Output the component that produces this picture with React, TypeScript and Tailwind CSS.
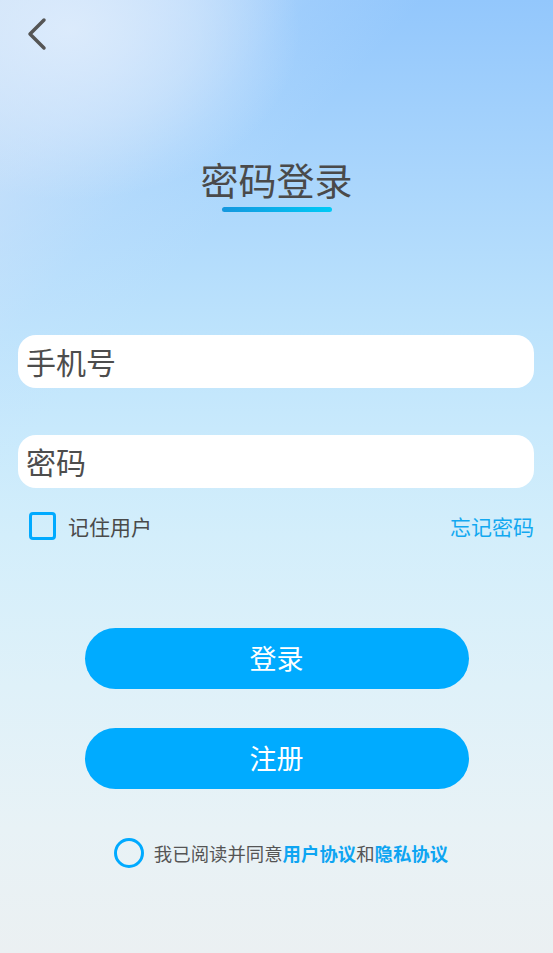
import { useState } from "react";

export default function App() {
  const [remember, setRemember] = useState(false);
  const [agreed, setAgreed] = useState(false);

  return (
    <main
      className="relative h-[953px] w-full overflow-hidden bg-[radial-gradient(ellipse_230px_170px_at_70px_30px,rgba(222,236,252,0.9)_0%,rgba(216,233,252,0.55)_55%,rgba(210,230,252,0)_100%),linear-gradient(132deg,rgba(214,230,246,0.85)_0%,rgba(208,228,250,0.6)_12%,rgba(200,226,252,0.2)_22%,rgba(200,226,252,0)_30%),linear-gradient(180deg,#93c7fc_0%,#a9d5fc_18%,#bde3fc_35%,#c8e9fc_45%,#d3eefb_56%,#dff1f9_72%,#e8f2f6_87%,#ebf0f2_100%)] text-[#505050]"
      style={{ fontFamily: '"Noto Sans CJK SC", "Noto Sans", sans-serif' }}
    >
      {/* Back */}
      <div className="pl-[26px] pt-[16px]">
        <button className="block">
          <svg className="block" width="22" height="36" viewBox="0 0 22 36" fill="none">
            <polyline
              points="18,4 4,18 18,32"
              stroke="#555"
              strokeWidth="3.5"
              strokeLinecap="round"
              strokeLinejoin="round"
            />
          </svg>
        </button>
      </div>

      {/* Title */}
      <div className="mt-[108px] flex flex-col items-center">
        <h1 className="text-[38px] leading-[38px] font-normal text-[#4a4a4a]">密码登录</h1>
        <span className="mt-[9px] h-[5px] w-[110px] rounded-full bg-[linear-gradient(90deg,#1597de,#00caf6)]" />
      </div>

      {/* Inputs */}
      <div className="ml-[18px] mr-[19px] mt-[123px] flex flex-col gap-[47px]">
        <div className="flex h-[53px] items-center rounded-[18px] bg-white pl-[8px]">
          <input
            className="w-full bg-transparent text-[30px] text-[#4d4d4d] outline-none placeholder:text-[#4d4d4d]"
            placeholder="手机号"
          />
        </div>
        <div className="flex h-[53px] items-center rounded-[18px] bg-white pl-[8px]">
          <input
            type="password"
            className="w-full bg-transparent text-[30px] text-[#4d4d4d] outline-none placeholder:text-[#4d4d4d]"
            placeholder="密码"
          />
        </div>
      </div>

      {/* Remember / forgot */}
      <div className="ml-[29px] mr-[19px] mt-[24px] flex h-[28px] items-center justify-between">
        <label className="flex items-center gap-[12px]" onClick={() => setRemember(!remember)}>
          <span className="h-[28px] w-[27px] rounded-[4px] border-[3.5px] border-[#00aaff]" />
          <span className="text-[21px] leading-[28px] text-[#4a4a4a]">记住用户</span>
        </label>
        <a className="text-[21px] leading-[28px] text-[#12a8f0]">忘记密码</a>
      </div>

      {/* Buttons */}
      <div className="mt-[88px] flex flex-col items-center gap-[39px]">
        <button className="h-[61px] w-[384px] rounded-full bg-[#00abff] text-[27px] text-white">
          登录
        </button>
        <button className="h-[61px] w-[384px] rounded-full bg-[#00abff] text-[27px] text-white">
          注册
        </button>
      </div>

      {/* Agreement */}
      <div className="mt-[49px] flex items-center justify-center gap-[10px] pl-[9px]">
        <span
          className="h-[30px] w-[30px] rounded-full border-[3.5px] border-[#00aaff]"
          onClick={() => setAgreed(!agreed)}
        />
        <p className="text-[18.4px] leading-[30px] text-[#555]">
          我已阅读并同意<b className="font-semibold text-[#0ea5f2]">用户协议</b>和
          <b className="font-semibold text-[#0ea5f2]">隐私协议</b>
        </p>
      </div>
    </main>
  );
}
